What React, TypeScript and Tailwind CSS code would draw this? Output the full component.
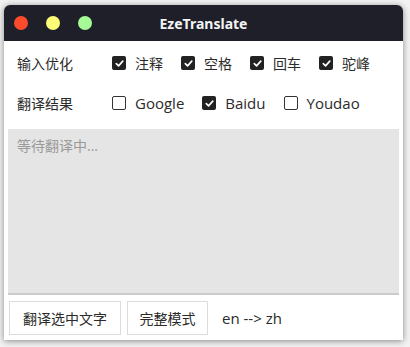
import type { ReactNode } from 'react'

const font = { fontFamily: '"Open Sans", "Noto Sans CJK SC", sans-serif' }

function Check({ checked, latin, children }: { checked?: boolean; latin?: boolean; children: ReactNode }) {
  return (
    <label className="mr-[18px] flex items-center">
      {checked ? (
        <span className="flex h-[14px] w-[14px] items-center justify-center rounded-[2px] bg-[#222]">
          <svg viewBox="0 0 12 12" className="h-[11px] w-[11px]">
            <path d="M2.5 6.2 L5 8.6 L9.6 3.4" fill="none" stroke="#fff" strokeWidth="1.8" strokeLinecap="round" strokeLinejoin="round" />
          </svg>
        </span>
      ) : (
        <span className="h-[14px] w-[14px] rounded-[2px] border-[1.5px] border-[#333] bg-white" />
      )}
      <span className={latin ? 'ml-[9px] text-[15px]' : 'ml-[9px]'}>{children}</span>
    </label>
  )
}

export default function App() {
  return (
    <div className="h-[347px] w-[410px] overflow-hidden bg-[#f2f2f2] pl-[4px] pt-[5px]" style={font}>
      <div className="flex h-[335px] w-[399px] flex-col overflow-hidden rounded-t-[6px] bg-white text-[14px] text-[#2b2b2b] shadow-[0_1px_6px_rgba(0,0,0,0.45)]">
        {/* title bar */}
        <div className="relative flex h-[36px] items-center bg-[#1e1f29]">
          <div className="flex items-center gap-[18px] pl-[10px]">
            <span className="h-[14px] w-[14px] rounded-full bg-[#fc4a2c]" />
            <span className="h-[14px] w-[14px] rounded-full bg-[#fdfc77]" />
            <span className="h-[14px] w-[14px] rounded-full bg-[#a6fa95]" />
          </div>
          <div
            className="absolute inset-0 flex items-center justify-center text-[14px] font-bold text-[#f4f4f4]"
            style={{ fontFamily: '"Noto Sans", sans-serif' }}
          >
            EzeTranslate
          </div>
        </div>

        <div className="px-[13px] pt-[2px]">
          <div className="flex h-[40px] items-center">
            <span className="w-[95px]">输入优化</span>
            <Check checked>注释</Check>
            <Check checked>空格</Check>
            <Check checked>回车</Check>
            <Check checked>驼峰</Check>
          </div>
          <div className="flex h-[40px] items-center">
            <span className="w-[95px]">翻译结果</span>
            <Check latin>Google</Check>
            <Check latin checked>Baidu</Check>
            <Check latin>Youdao</Check>
          </div>
        </div>

        <div className="mx-[4px] mt-[6px] h-[166px] border-b-2 border-[#cbcbcb] bg-[#e5e5e5] px-[9px] py-[6px] text-[#9a9a9a]">
          等待翻译中...
        </div>

        <div className="flex items-center gap-[6px] px-[5px] pt-[6px]">
          <button className="h-[34px] w-[112px] border border-[#dcdcdc] bg-white">翻译选中文字</button>
          <button className="h-[34px] w-[81px] border border-[#dcdcdc] bg-white">完整模式</button>
          <span className="ml-[8px] text-[15px]">en --&gt; zh</span>
        </div>
      </div>
    </div>
  )
}
